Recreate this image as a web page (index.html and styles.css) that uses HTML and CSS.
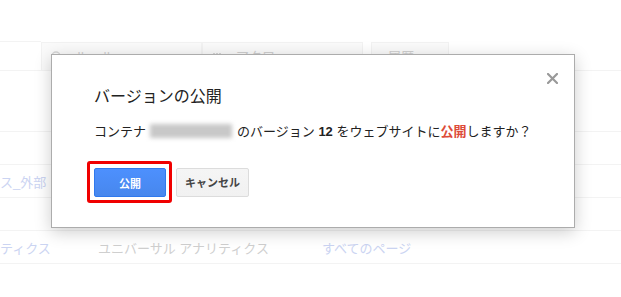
FILE: index.html
```html
<!DOCTYPE html>
<html lang="ja">
<head>
<meta charset="utf-8">
<title>バージョンの公開</title>
<link rel="stylesheet" href="styles.css">
</head>
<body>
<div class="page">
  <div class="spacer"></div>
  <div class="tabs">
    <div class="tab-first"></div>
    <div class="tab tab-wide">
      <svg class="tab-icon" width="10" height="10" viewBox="0 0 10 10"><circle cx="5" cy="5" r="4" fill="none" stroke="#d6d6d6" stroke-width="1.5"/></svg>
      <span>ルール</span>
    </div>
    <div class="tab tab-wide">
      <svg class="tab-icon" width="10" height="10" viewBox="0 0 10 10"><rect x="1" y="2" width="2" height="6" fill="#d6d6d6"/><rect x="4" y="2" width="2" height="6" fill="#d6d6d6"/><rect x="7" y="2" width="2" height="6" fill="#d6d6d6"/></svg>
      <span>マクロ</span>
    </div>
    <div class="tab tab-narrow"><span>履歴</span></div>
  </div>
  <div class="row row-tall"></div>
  <div class="row"></div>
  <div class="row"><span class="link">ス_外部</span></div>
  <div class="row"></div>
  <div class="row cols">
    <span class="link col-a">ティクス</span>
    <span class="muted col-b">ユニバーサル アナリティクス</span>
    <span class="link col-c">すべてのページ</span>
  </div>
</div>

<div class="dialog">
  <svg class="close" width="11" height="11" viewBox="0 0 11 11"><path d="M1 1 L10 10 M10 1 L1 10" stroke="#999" stroke-width="2.2" stroke-linecap="square"/></svg>
  <h1 class="title">バージョンの公開</h1>
  <p class="msg">コンテナ<span class="blur"></span>のバージョン <b>12</b> をウェブサイトに<b class="red">公開</b>しますか？</p>
  <div class="actions">
    <span class="highlight"><button class="btn btn-primary">公開</button></span>
    <button class="btn btn-default">キャンセル</button>
  </div>
</div>
</body>
</html>
```

FILE: styles.css
```css
html, body {
  margin: 0;
  padding: 0;
  background: #fff;
}
body {
  width: 621px;
  height: 297px;
  overflow: hidden;
  position: relative;
  font-family: "Liberation Sans", "Noto Sans CJK JP", sans-serif;
}
.page {
  font-size: 13px;
}
.spacer {
  height: 41px;
}
.tabs {
  display: flex;
  height: 29px;
  border-bottom: 1px solid #f3f3f3;
}
.tab-first {
  width: 41px;
  border-top: 1px solid #f3f3f3;
}
.tab {
  box-sizing: border-box;
  margin-top: 1px;
  background: #fafafa;
  border: 1px solid #f2f2f2;
  border-bottom: none;
  display: flex;
  align-items: flex-start;
  padding: 3px 0 0 9px;
  gap: 14px;
  color: #cfcfcf;
}
.tab-wide {
  width: 161px;
}
.tab-narrow {
  width: 78px;
  margin-left: 8px;
  padding-left: 16px;
}
.tab-icon {
  margin-top: 5px;
}
.row {
  height: 32px;
  border-bottom: 1px solid #f3f3f3;
  display: flex;
  align-items: center;
}
.row-tall {
  height: 60px;
}
.link {
  color: #cbd4f2;
}
.muted {
  color: #cfcfcf;
}
.col-a {
  width: 98px;
}
.col-b {
  width: 224px;
}

.dialog {
  position: absolute;
  left: 51px;
  top: 54px;
  width: 438px;
  padding: 30px 42px 24px 42px;
  background: #fff;
  border: 1px solid #acacac;
  box-shadow: 0 4px 16px rgba(0, 0, 0, 0.2);
  color: #222;
}
.close {
  position: absolute;
  right: 16px;
  top: 18px;
}
.title {
  margin: 0;
  font-size: 16px;
  line-height: 24px;
  font-weight: normal;
  color: #222;
}
.msg {
  margin: 13px 0 0 0;
  font-size: 13px;
  line-height: 20px;
  white-space: nowrap;
}
.msg b {
  font-weight: bold;
}
.red {
  color: #dd4b39;
}
.blur {
  display: inline-block;
  width: 82px;
  height: 14px;
  margin: 0 5px 0 4px;
  background: #c8c8c8;
  filter: blur(2px);
  vertical-align: -2px;
}
.actions {
  margin-top: 19px;
  display: flex;
  align-items: center;
  gap: 4px;
}
.highlight {
  display: inline-flex;
  margin-left: -7px;
  padding: 4px 3px 3px 4px;
  border: 3px solid #f00000;
  border-radius: 3px;
}
.btn {
  box-sizing: border-box;
  height: 29px;
  min-width: 72px;
  padding: 0 8px;
  font-family: "Liberation Sans", "Noto Sans CJK JP", sans-serif;
  font-size: 11px;
  font-weight: bold;
  border-radius: 2px;
  cursor: default;
}
.btn-primary {
  color: #fff;
  background: linear-gradient(#4d90fe, #4787ed);
  border: 1px solid #3079ed;
}
.btn-default {
  width: 73px;
  color: #444;
  background: linear-gradient(#f5f5f5, #f1f1f1);
  border: 1px solid #dcdcdc;
}
```
